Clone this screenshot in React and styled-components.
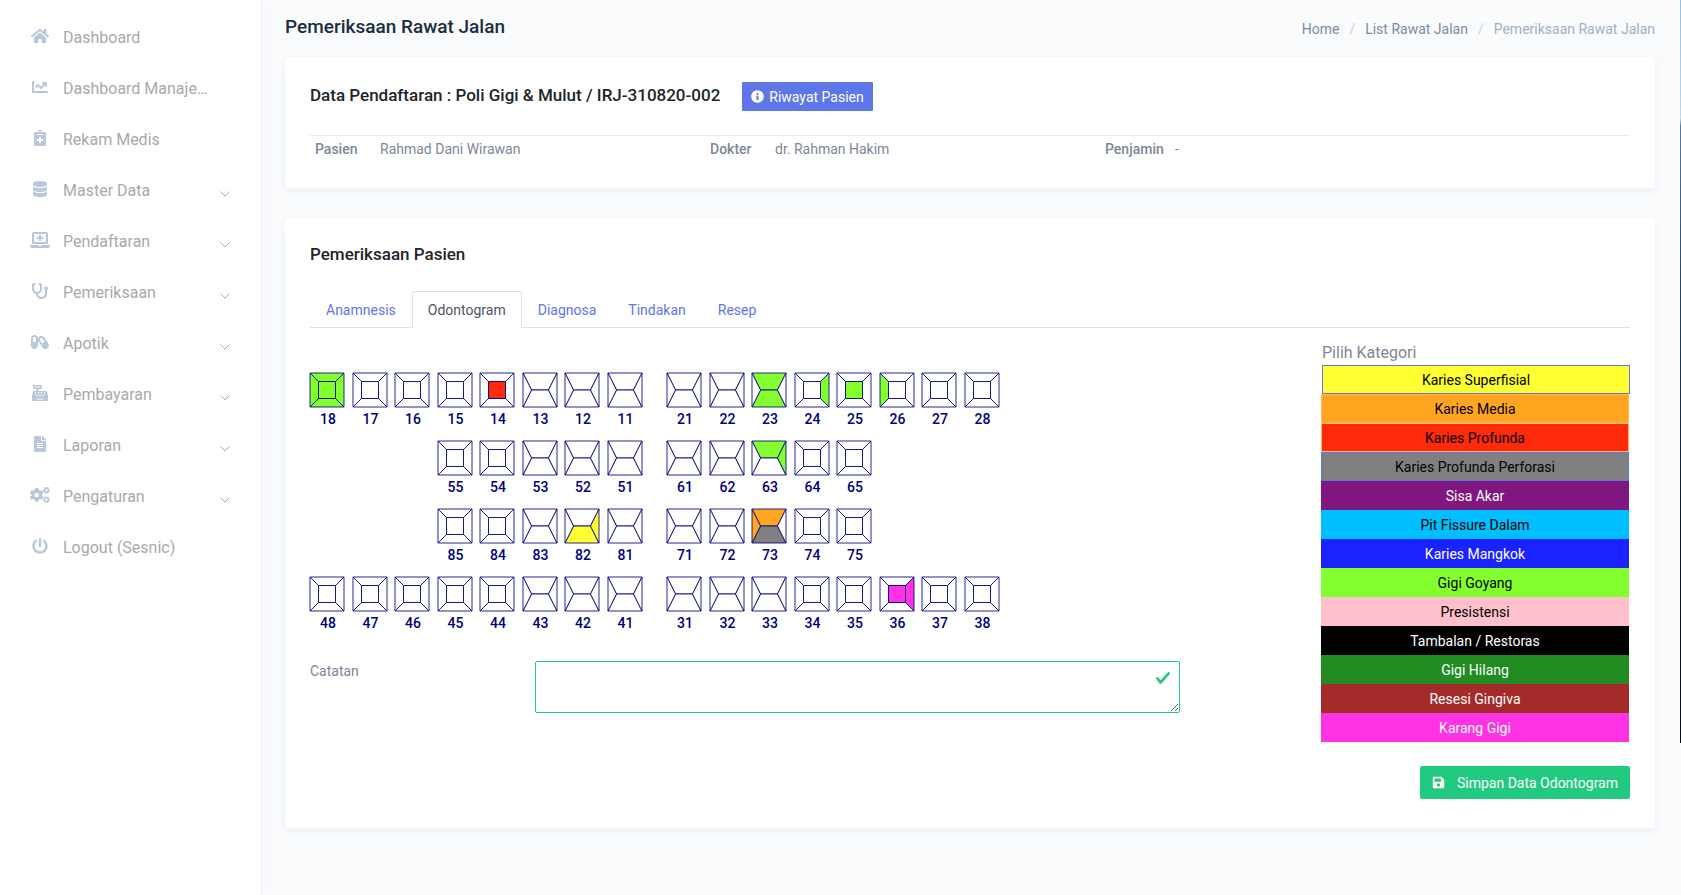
import React, { useState } from 'react';
import styled, { createGlobalStyle } from 'styled-components';
import {
  FaHome, FaChartLine, FaNotesMedical, FaDatabase, FaLaptopMedical, FaStethoscope,
  FaCapsules, FaCashRegister, FaFileAlt, FaCogs, FaPowerOff, FaInfoCircle, FaSave,
} from 'react-icons/fa';

const GlobalStyle = createGlobalStyle`
  *, *::before, *::after { box-sizing: border-box; }
  body {
    margin: 0;
    background: #f9fbfd;
    color: #7c8798;
    font-family: Roboto, "Liberation Sans", sans-serif;
    font-size: 14px;
    line-height: 20px;
  }
  button, textarea { font: inherit; }
  a { text-decoration: none; }
  h1, h2, ul, ol { margin: 0; padding: 0; }
  ul, ol { list-style: none; }
`;

const Layout = styled.div`
  display: flex;
  min-height: 100vh;
`;

const ScreenEdge = styled.div`
  position: fixed;
  top: 0;
  right: 0;
  width: 1px;
  height: 83vh;
  background: linear-gradient(#8fc0e8, #b9d9ec 16%, #4f7ba6 17%, #1d4468 40%, #04192e 70%, #020d1a);
`;

const Sidebar = styled.nav`
  flex: 0 0 260px;
  padding-top: 12px;
  background: #fff;
  box-shadow: 1px 0 12px rgba(120, 140, 180, 0.06);
`;

const MenuLink = styled.a`
  display: flex;
  align-items: center;
  height: 51px;
  padding: 0 30px 0 28px;
  color: #a9a9a9;
  font-size: 16px;
`;

const MenuIcon = styled.span`
  display: flex;
  justify-content: center;
  flex: 0 0 24px;
  margin: 0 11px 3px 0;
  color: #bac6d9;
  svg { width: 20px; height: 16px; }
`;

const Chevron = styled.svg`
  width: 10px;
  height: 6px;
  margin: 6px 0 0 auto;
  fill: none;
  stroke: #a9a9a9;
`;

const Main = styled.main`
  flex: 1;
  min-width: 0;
  padding: 0 26px 25px 25px;
`;

const PageHeader = styled.header`
  display: flex;
  justify-content: space-between;
  align-items: center;
  height: 57px;
  padding-bottom: 3px;
`;

const PageTitle = styled.h1`
  color: #1c2d41;
  font-size: 19px;
  font-weight: 500;
`;

const Crumbs = styled.ol`
  display: flex;
  padding-top: 4px;
`;

const Crumb = styled.li`
  color: #a1aec5;
  & + &::before {
    content: '/';
    padding: 0 10px;
    color: #ced4da;
  }
  a { color: #7c8ba3; }
`;

const Card = styled.section`
  margin-bottom: 30px;
  padding: 25px 25px ${(p) => p.$bottom || 25}px;
  border-radius: 4px;
  background: #fff;
  box-shadow: 0 3px 9px rgba(162, 176, 200, 0.14);
`;

const CardTitle = styled.h2`
  color: #212529;
  font-size: 17px;
  line-height: 22px;
  font-weight: 500;
`;

const CardHead = styled.div`
  display: flex;
  align-items: center;
  gap: 22px;
  margin-bottom: 24px;
  ${CardTitle} { padding-bottom: 3px; }
`;

const HistoryButton = styled.button`
  display: flex;
  align-items: center;
  gap: 5px;
  height: 29px;
  padding: 0 9px;
  border: 0;
  border-radius: 1px;
  background: #5f76e8;
  color: #fff;
  svg { width: 13px; height: 13px; }
`;

const PatientTable = styled.table`
  width: 100%;
  table-layout: fixed;
  border-collapse: collapse;
  border-top: 1px solid #e8eaec;
  th, td { padding: 3px 5px 4px; text-align: left; }
  th { font-weight: 500; }
`;

const Col = styled.col`
  width: ${(p) => p.$w};
`;

const Tabs = styled.div`
  display: flex;
  margin-top: 26px;
  border-bottom: 1px solid #dee2e6;
`;

const Tab = styled.button`
  height: 37px;
  margin-bottom: -1px;
  padding: 0 15px;
  border: 1px solid;
  border-color: ${(p) => (p.$active ? '#dee2e6 #dee2e6 #fff' : 'transparent')};
  border-radius: 2px 2px 0 0;
  background: ${(p) => (p.$active ? '#fff' : 'none')};
  color: ${(p) => (p.$active ? '#4f5467' : '#5f76e8')};
`;

const ExamBody = styled.div`
  display: flex;
  justify-content: space-between;
  gap: 30px;
`;

const ChartColumn = styled.div`
  flex: 0 1 870px;
  padding-top: 45px;
`;

const ToothRow = styled.div`
  display: flex;
  gap: 17px;
  height: 68px;
`;

const Quadrant = styled.div`
  display: grid;
  grid-template-columns: repeat(8, 1fr);
  flex: 0 0 340px;
  & > :first-child { grid-column-start: ${(p) => p.$start}; }
`;

const ToothCell = styled.button`
  display: flex;
  flex-direction: column;
  align-items: flex-start;
  height: 58px;
  padding: 0;
  border: 0;
  background: none;
  color: #000080;
  font-weight: 500;
  line-height: 24px;
  svg { overflow: visible; }
  span { padding-left: 10px; }
`;

const NoteRow = styled.div`
  display: flex;
  align-items: flex-start;
  margin-top: 16px;
`;

const NoteLabel = styled.label`
  flex: 0 0 225px;
`;

const NoteField = styled.div`
  position: relative;
  display: flex;
  flex: 1;
`;

const NoteInput = styled.textarea`
  width: 100%;
  height: 52px;
  padding: 6px 40px 6px 12px;
  border: 1px solid #22ca80;
  border-radius: 2px;
  background: #fff;
  resize: vertical;
`;

const ValidMark = styled.svg`
  position: absolute;
  top: 9px;
  right: 9px;
  width: 16px;
  height: 16px;
  fill: #22ca80;
  pointer-events: none;
`;

const CategoryColumn = styled.div`
  display: flex;
  flex-direction: column;
  flex: 0 0 308px;
  padding-top: 13px;
`;

const CategoryTitle = styled.span`
  font-size: 16px;
  line-height: 24px;
`;

const CategoryButton = styled.button`
  height: 29px;
  margin: 0 1px 0 -1px;
  padding: 0;
  border: 1px solid ${(p) => p.$edge || p.$fill};
  background: ${(p) => p.$fill};
  color: ${(p) => (p.$light ? '#fff' : '#000')};
  &:first-of-type { margin: 0; }
`;

const SaveButton = styled.button`
  display: flex;
  align-items: center;
  align-self: flex-end;
  gap: 12px;
  height: 33px;
  margin-top: 24px;
  padding: 0 12px;
  border: 0;
  border-radius: 2px;
  background: #22ca80;
  color: #fff;
  svg { width: 13px; height: 13px; }
`;

const MENU = [
  ['Dashboard', FaHome],
  ['Dashboard Manaje…', FaChartLine],
  ['Rekam Medis', FaNotesMedical],
  ['Master Data', FaDatabase, true],
  ['Pendaftaran', FaLaptopMedical, true],
  ['Pemeriksaan', FaStethoscope, true],
  ['Apotik', FaCapsules, true],
  ['Pembayaran', FaCashRegister, true],
  ['Laporan', FaFileAlt, true],
  ['Pengaturan', FaCogs, true],
  ['Logout (Sesnic)', FaPowerOff],
];

const TABS = ['Anamnesis', 'Odontogram', 'Diagnosa', 'Tindakan', 'Resep'];

const YELLOW = '#ffff31';
const ORANGE = '#ffa51f';
const RED = '#ff2a0a';
const GRAY = '#808080';
const GREEN = '#83ff2f';
const MAGENTA = '#ff33e4';

const CATEGORIES = [
  { name: 'Karies Superfisial', fill: YELLOW, edge: '#5f76e8' },
  { name: 'Karies Media', fill: ORANGE, edge: '#fdb75c' },
  { name: 'Karies Profunda', fill: RED, edge: '#fdb75c' },
  { name: 'Karies Profunda Perforasi', fill: GRAY, edge: '#5f76e8' },
  { name: 'Sisa Akar', fill: '#80177f', light: true },
  { name: 'Pit Fissure Dalam', fill: '#00bfff' },
  { name: 'Karies Mangkok', fill: '#1a22ff', light: true },
  { name: 'Gigi Goyang', fill: GREEN },
  { name: 'Presistensi', fill: '#ffc0cb' },
  { name: 'Tambalan / Restoras', fill: '#000000', light: true },
  { name: 'Gigi Hilang', fill: '#228b22', light: true },
  { name: 'Resesi Gingiva', fill: '#a52a2a', light: true },
  { name: 'Karang Gigi', fill: MAGENTA, light: true },
];

const ROWS = [
  [[18, 17, 16, 15, 14, 13, 12, 11], [21, 22, 23, 24, 25, 26, 27, 28]],
  [[55, 54, 53, 52, 51], [61, 62, 63, 64, 65]],
  [[85, 84, 83, 82, 81], [71, 72, 73, 74, 75]],
  [[48, 47, 46, 45, 44, 43, 42, 41], [31, 32, 33, 34, 35, 36, 37, 38]],
];

const FINDINGS = {
  18: { top: GREEN, right: GREEN, bottom: GREEN, left: GREEN, center: GREEN },
  14: { center: RED },
  23: { top: GREEN, bottom: GREEN },
  24: { right: GREEN },
  25: { center: GREEN },
  26: { left: GREEN },
  63: { top: GREEN, right: GREEN },
  82: { bottom: YELLOW, right: YELLOW },
  73: { top: ORANGE, left: ORANGE, bottom: GRAY },
  36: { center: MAGENTA, right: MAGENTA },
};

const MOLAR = {
  top: '0,0 20,0 15,5 5,5',
  bottom: '5,15 15,15 20,20 0,20',
  right: '15,5 20,0 20,20 15,15',
  left: '0,0 5,5 5,15 0,20',
  center: '5,5 15,5 15,15 5,15',
};

const INCISOR = {
  top: '0,0 20,0 15,10 5,10',
  bottom: '5,10 15,10 20,20 0,20',
  right: '15,10 20,0 20,20',
  left: '0,0 5,10 0,20',
};

function Tooth({ number }) {
  const surfaces = number % 10 <= 3 ? INCISOR : MOLAR;
  const marks = FINDINGS[number] || {};
  return (
    <ToothCell type="button">
      <svg width="34" height="34" viewBox="0 0 20 20" stroke="#000080" strokeWidth="0.5" aria-hidden="true">
        {Object.entries(surfaces).map(([side, points]) => (
          <polygon key={side} points={points} fill={marks[side] || '#fff'} />
        ))}
      </svg>
      <span>{number}</span>
    </ToothCell>
  );
}

export default function App() {
  const [tab, setTab] = useState('Odontogram');
  const [note, setNote] = useState('');

  return (
    <>
      <GlobalStyle />
      <Layout>
        <Sidebar>
          <ul>
            {MENU.map(([label, Icon, expandable]) => (
              <li key={label}>
                <MenuLink href="#">
                  <MenuIcon><Icon /></MenuIcon>
                  {label}
                  {expandable && (
                    <Chevron viewBox="0 0 10 6" aria-hidden="true"><path d="M.5.5 5 5 9.5.5" /></Chevron>
                  )}
                </MenuLink>
              </li>
            ))}
          </ul>
        </Sidebar>
        <Main>
          <PageHeader>
            <PageTitle>Pemeriksaan Rawat Jalan</PageTitle>
            <Crumbs>
              <Crumb><a href="#">Home</a></Crumb>
              <Crumb><a href="#">List Rawat Jalan</a></Crumb>
              <Crumb>Pemeriksaan Rawat Jalan</Crumb>
            </Crumbs>
          </PageHeader>

          <Card>
            <CardHead>
              <CardTitle>Data Pendaftaran : Poli Gigi &amp; Mulut / IRJ-310820-002</CardTitle>
              <HistoryButton type="button"><FaInfoCircle />Riwayat Pasien</HistoryButton>
            </CardHead>
            <PatientTable>
              <colgroup>
                <Col $w="65px" /><Col $w="25%" /><Col $w="65px" /><Col $w="25%" /><Col $w="70px" /><Col />
              </colgroup>
              <tbody>
                <tr>
                  <th scope="row">Pasien</th><td>Rahmad Dani Wirawan</td>
                  <th scope="row">Dokter</th><td>dr. Rahman Hakim</td>
                  <th scope="row">Penjamin</th><td>-</td>
                </tr>
              </tbody>
            </PatientTable>
          </Card>

          <Card $bottom={29}>
            <CardTitle>Pemeriksaan Pasien</CardTitle>
            <Tabs role="tablist">
              {TABS.map((name) => (
                <Tab
                  key={name}
                  type="button"
                  role="tab"
                  aria-selected={tab === name}
                  $active={tab === name}
                  onClick={() => setTab(name)}
                >
                  {name}
                </Tab>
              ))}
            </Tabs>
            <ExamBody>
              <ChartColumn>
                {ROWS.map(([left, right]) => (
                  <ToothRow key={left[0]}>
                    <Quadrant $start={9 - left.length}>
                      {left.map((n) => <Tooth key={n} number={n} />)}
                    </Quadrant>
                    <Quadrant $start={1}>
                      {right.map((n) => <Tooth key={n} number={n} />)}
                    </Quadrant>
                  </ToothRow>
                ))}
                <NoteRow>
                  <NoteLabel htmlFor="catatan">Catatan</NoteLabel>
                  <NoteField>
                    <NoteInput id="catatan" value={note} onChange={(e) => setNote(e.target.value)} />
                    <ValidMark viewBox="0 0 8 8" aria-hidden="true">
                      <path d="M2.3 6.73.6 4.53c-.4-1.04.46-1.4 1.1-.8l1.1 1.4 3.4-3.8c.6-.63 1.6-.27 1.2.7l-4 4.6c-.43.5-.8.4-1.1.1z" />
                    </ValidMark>
                  </NoteField>
                </NoteRow>
              </ChartColumn>
              <CategoryColumn>
                <CategoryTitle>Pilih Kategori</CategoryTitle>
                {CATEGORIES.map((c) => (
                  <CategoryButton key={c.name} type="button" $fill={c.fill} $edge={c.edge} $light={c.light}>
                    {c.name}
                  </CategoryButton>
                ))}
                <SaveButton type="button"><FaSave />Simpan Data Odontogram</SaveButton>
              </CategoryColumn>
            </ExamBody>
          </Card>
        </Main>
      </Layout>
      <ScreenEdge />
    </>
  );
}
